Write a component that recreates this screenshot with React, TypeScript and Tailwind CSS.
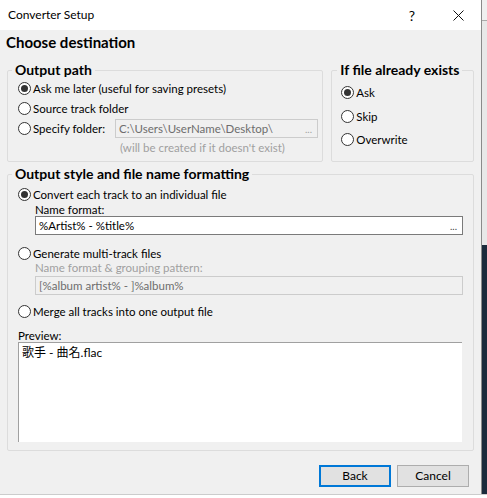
import React from 'react'

const font = { fontFamily: 'Lato, "Noto Sans CJK TC", sans-serif' }

function Radio({ checked, label, className = '' }: { checked?: boolean; label: string; className?: string }) {
  return (
    <div className={`flex items-center h-[19px] whitespace-nowrap ${className}`}>
      <span className="w-[13px] h-[13px] rounded-full border border-[#333] bg-white flex items-center justify-center shrink-0">
        {checked && <span className="w-[7px] h-[7px] rounded-full bg-[#333]" />}
      </span>
      <span className="ml-[2px] text-[11.5px] text-black leading-none">{label}</span>
    </div>
  )
}

function Field({ value, disabled, dots, className = '' }: { value: string; disabled?: boolean; dots?: boolean; className?: string }) {
  return (
    <div className={`flex items-center justify-between h-[19px] px-[3px] text-[11.5px] whitespace-nowrap ${disabled ? 'border border-[#cccccc] text-[#6d6d6d] bg-[#f0f0f0]' : 'border border-[#7a7a7a] bg-white text-black'} ${className}`}>
      <span className="leading-none">{value}</span>
      {dots && <span className={`text-[10px] leading-none pr-[2px] ${disabled ? 'text-[#a0a0a0]' : 'text-[#444]'}`}>...</span>}
    </div>
  )
}

function Legend({ children, className = '' }: { children: React.ReactNode; className?: string }) {
  return (
    <legend className={`px-[3px] text-[14px] font-bold text-black leading-[16px] whitespace-nowrap ${className}`}>{children}</legend>
  )
}

export default function App() {
  return (
    <div className="w-[487px] h-[498px] flex flex-col bg-white overflow-hidden" style={font}>
      <div className="flex h-[494px]">
        {/* dialog window */}
        <div className="w-[482px] flex flex-col border-r border-[#8a8a8a] bg-[#f0f0f0]">
          <div className="h-[30px] bg-white flex items-center pl-[8px] shrink-0">
            <span className="text-[12px] text-black flex-1">Converter Setup</span>
            <span className="text-[14px] text-black mr-[38px]">?</span>
            <svg width="11" height="11" viewBox="0 0 11 11" className="mr-[17px]">
              <path d="M0.5 0.5 L10.5 10.5 M10.5 0.5 L0.5 10.5" stroke="#111" strokeWidth="1" />
            </svg>
          </div>

          <div className="pl-[6px] pt-[2px] h-[24px] text-[15px] font-bold text-black leading-[20px] whitespace-nowrap">Choose destination</div>

          <div className="flex gap-[8px] px-[7px] mt-[8px]">
            <fieldset className="w-[317px] h-[100px] border border-[#dcdcdc] rounded-[2px] pl-[10px]">
              <Legend className="-ml-[6px]">Output path</Legend>
              <Radio checked label="Ask me later (useful for saving presets)" className="mt-[1px]" />
              <Radio label="Source track folder" className="mt-[1px]" />
              <div className="flex items-center mt-[1px]">
                <Radio label="Specify folder:" className="w-[97px]" />
                <Field value="C:\Users\UserName\Desktop\" disabled dots className="w-[203px]" />
              </div>
              <div className="ml-[102px] mt-[2px] text-[11.5px] text-[#a0a0a0] leading-[16px] whitespace-nowrap">(will be created if it doesn't exist)</div>
            </fieldset>

            <fieldset className="w-[143px] h-[100px] border border-[#dcdcdc] rounded-[2px] pl-[9px]">
              <Legend className="-ml-[4px]">If file already exists</Legend>
              <Radio checked label="Ask" className="mt-[5px]" />
              <Radio label="Skip" className="mt-[5px]" />
              <Radio label="Overwrite" className="mt-[4px]" />
            </fieldset>
          </div>

          <fieldset className="mx-[7px] mt-[4px] border border-[#dcdcdc] rounded-[2px] pl-[10px] pr-[10px] pb-[8px]">
            <Legend className="-ml-[6px]">Output style and file name formatting</Legend>
            <Radio checked label="Convert each track to an individual file" className="mt-[3px]" />
            <div className="ml-[17px] text-[11.5px] text-black leading-[11px]">Name format:</div>
            <Field value="%Artist% - %title%" dots className="ml-[17px] mt-[1px]" />
            <Radio label="Generate multi-track files" className="mt-[9px]" />
            <div className="ml-[17px] text-[11.5px] text-[#a0a0a0] leading-[10px]">Name format &amp; grouping pattern:</div>
            <Field value="[%album artist% - ]%album%" disabled className="ml-[17px] mt-[3px] h-[18px]" />
            <Radio label="Merge all tracks into one output file" className="mt-[7px]" />
            <div className="text-[11.5px] text-black leading-[12px] mt-[9px]">Preview:</div>
            <div className="h-[100px] mr-[1px] border-l border-t border-[#a0a0a0] bg-white px-[3px] pt-[2px] text-[12px] text-black leading-[16px]">
              歌手 - 曲名.flac
            </div>
          </fieldset>

          <div className="flex justify-end gap-[6px] pr-[12px] mt-[14px]">
            <button className="w-[72px] h-[22px] border-2 border-[#0078d7] bg-[#e1e1e1] text-[12px] text-black">Back</button>
            <button className="w-[72px] h-[22px] border border-[#adadad] bg-[#e1e1e1] text-[12px] text-black">Cancel</button>
          </div>
        </div>
        {/* app behind */}
        <div className="w-[5px] flex flex-col">
          <div className="h-[20px] bg-[#f0f0f0]" />
          <div className="h-[225px] bg-[#e8e8e8] border-t border-[#aaa]" />
          <div className="flex-1 bg-[#1b2b3c]" />
        </div>
      </div>
      <div className="h-[4px] bg-white border-t border-[#ccc]" />
    </div>
  )
}
